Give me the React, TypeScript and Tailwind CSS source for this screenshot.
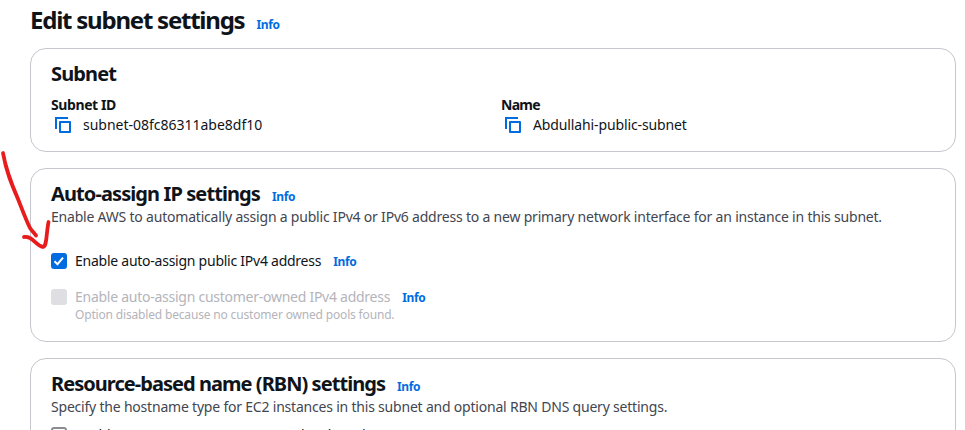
import type { ReactNode } from 'react';

function Info({ className = '' }: { className?: string }) {
  return (
    <a className={`ml-3 text-[12px] leading-4 font-bold tracking-[-0.35px] text-[#006ce0] ${className}`}>
      Info
    </a>
  );
}

function CopyIcon() {
  return (
    <svg width="16" height="16" viewBox="0 0 16 16" fill="none" stroke="#006ce0" strokeWidth="2" className="block shrink-0">
      <path d="M1 12V1h12" />
      <path d="M5 5h10v10H5z" strokeLinejoin="round" />
    </svg>
  );
}

function Card({ children, className = '' }: { children: ReactNode; className?: string }) {
  return (
    <section className={`shrink-0 rounded-2xl border border-[#c6c6cd] bg-white px-5 ${className}`}>
      {children}
    </section>
  );
}

function Field({ label, value, labelClass, valueClass }: { label: string; value: string; labelClass: string; valueClass: string }) {
  return (
    <div className="w-[450px] shrink-0">
      <div className={`h-5 text-[14px] leading-5 font-bold ${labelClass}`}>{label}</div>
      <div className="flex h-5 items-center pl-1">
        <CopyIcon />
        <span className={`ml-3 text-[14px] leading-5 ${valueClass}`}>{value}</span>
      </div>
    </div>
  );
}

export default function App() {
  return (
    <main className="relative flex h-[430px] w-[965px] flex-col overflow-hidden bg-white pr-[9px] pl-[30px] font-['Noto_Sans',sans-serif] whitespace-nowrap text-[#0f141a]">
      <header className="flex h-12 shrink-0 items-baseline pt-[5px]">
        <h1 className="text-[24px] leading-[30px] font-bold tracking-[-1.23px]">Edit subnet settings</h1>
        <Info />
      </header>

      <Card className="h-[104px] pt-[13px]">
        <h2 className="text-[20px] leading-6 font-bold tracking-[-0.85px]">Subnet</h2>
        <div className="mt-[9px] flex">
          <Field label="Subnet ID" value="subnet-08fc86311abe8df10" labelClass="tracking-[-0.4px]" valueClass="tracking-[-0.01px]" />
          <Field label="Name" value="Abdullahi-public-subnet" labelClass="tracking-[-0.75px]" valueClass="tracking-[-0.12px]" />
        </div>
      </Card>

      <Card className="mt-4 h-[174px] pt-[13px]">
        <div className="flex h-6 items-baseline">
          <h2 className="text-[20px] leading-6 font-bold tracking-[-0.9px]">Auto-assign IP settings</h2>
          <Info />
        </div>
        <p className="mt-px text-[14px] leading-5 tracking-[-0.205px] text-[#424650]">
          Enable AWS to automatically assign a public IPv4 or IPv6 address to a new primary network interface for an instance in this subnet.
        </p>
        <div className="mt-6 flex h-5 items-center">
          <span className="flex size-4 shrink-0 items-center justify-center rounded-[3px] bg-[#006ce0]">
            <svg width="16" height="16" viewBox="0 0 16 16" fill="none" stroke="white" strokeWidth="2">
              <path d="M3.5 8.2 6.5 11.2 12 4.7" />
            </svg>
          </span>
          <span className="ml-2 text-[14px] leading-5 tracking-[-0.25px]">Enable auto-assign public IPv4 address</span>
          <Info className="pt-0.5" />
        </div>
        <div className="mt-4 flex h-5 items-center">
          <span className="size-4 shrink-0 rounded-[3px] bg-[#dedee3]" />
          <span className="ml-2 text-[14px] leading-5 tracking-[-0.26px] text-[#b4b4bb]">Enable auto-assign customer-owned IPv4 address</span>
          <Info className="pt-0.5" />
        </div>
        <p className="pl-6 text-[12px] leading-4 tracking-[-0.17px] text-[#b4b4bb]">Option disabled because no customer owned pools found.</p>
      </Card>

      <Card className="mt-4 h-[200px] pt-[13px]">
        <div className="flex h-6 items-baseline">
          <h2 className="text-[20px] leading-6 font-bold tracking-[-0.95px]">Resource-based name (RBN) settings</h2>
          <Info />
        </div>
        <p className="mt-px text-[14px] leading-5 tracking-[-0.205px] text-[#424650]">
          Specify the hostname type for EC2 instances in this subnet and optional RBN DNS query settings.
        </p>
        <div className="mt-2 flex h-5 items-center">
          <span className="size-4 shrink-0 rounded-[3px] border-2 border-[#8c8c94]" />
          <span className="ml-2 text-[14px] leading-5 tracking-[-0.25px]">Enable resource name DNS A record on launch</span>
        </div>
      </Card>

      <svg className="pointer-events-none absolute top-0 left-0" width="70" height="260" viewBox="0 0 70 260" fill="none" stroke="#e81c1c" strokeWidth="3.8" strokeLinecap="round" strokeLinejoin="round">
        <path d="M3 153C6 171 12 185 18 199C22 209 26 220 30 228C32 231 34 233 36 235.500" />
        <path d="M24 237C33 236 35 245 43 247C47 246 46 235 48.500 222" />
      </svg>
    </main>
  );
}
